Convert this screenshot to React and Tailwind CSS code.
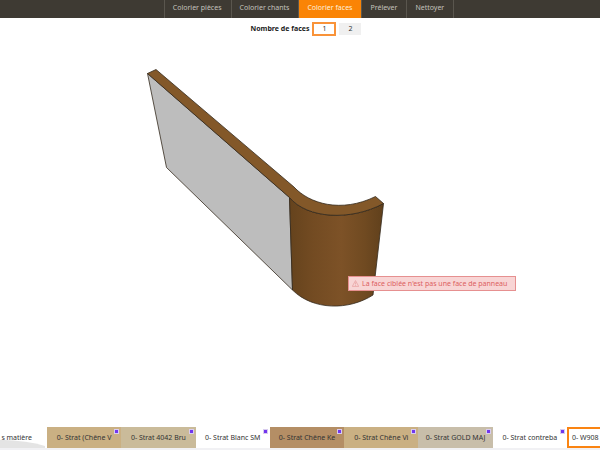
import React from 'react';

const tools = ['Colorier pièces', 'Colorier chants', 'Colorier faces', 'Prélever', 'Nettoyer'];

const materials = [
  { name: 'Strat (Chêne V', bg: 'bg-[#cab083]' },
  { name: 'Strat 4042 Bru', bg: 'bg-[#cabb9a]' },
  { name: 'Strat Blanc SM', bg: 'bg-white' },
  { name: 'Strat Chêne Ke', bg: 'bg-[#b48e65]' },
  { name: 'Strat Chêne Vi', bg: 'bg-[#cab083]' },
  { name: 'Strat GOLD MAJ', bg: 'bg-[#c8beaa]' },
  { name: 'Strat contreba', bg: 'bg-white' },
];

const ToolBar = () => (
  <nav className="flex h-[18px] shrink-0 justify-center bg-[#3e3a33] pl-[18px]">
    <div className="flex divide-x divide-[#5a564e] border-x border-[#5a564e]">
      {tools.map((tool) => (
        <button
          key={tool}
          type="button"
          className={
            tool === 'Colorier faces'
              ? 'bg-[#fa8405] pr-[9px] pb-[3px] pl-2 text-[7px] leading-3 text-[#fff0dc]'
              : 'pr-[9px] pb-[3px] pl-2 text-[7px] leading-3 text-[#c4c2bd]'
          }
        >
          {tool}
        </button>
      ))}
    </div>
  </nav>
);

const FaceCount = () => (
  <div className="flex shrink-0 items-center justify-center gap-[3px] pt-1 pl-3 text-[7px] leading-3">
    <span className="font-bold text-[#222]">Nombre de faces</span>
    <button type="button" className="h-[14px] w-6 border-2 border-[#f99339] bg-white leading-[10px]">
      1
    </button>
    <button type="button" className="h-3 w-[22px] bg-[#f0f0f0]">
      2
    </button>
  </div>
);

const Panel = () => (
  <svg viewBox="0 38 600 386" className="h-full w-full" aria-hidden="true">
    <defs>
      <linearGradient id="curve" x1="0" x2="1" y1="0" y2="0">
        <stop offset="0" stopColor="#65431d" />
        <stop offset="0.25" stopColor="#734b22" />
        <stop offset="0.55" stopColor="#7d5227" />
        <stop offset="0.8" stopColor="#704a21" />
        <stop offset="1" stopColor="#60401c" />
      </linearGradient>
    </defs>
    <g stroke="#33291d" strokeWidth="0.8" strokeLinejoin="round">
      <path d="M147.500 73L289.500 197L292.500 289.500L166.500 167Z" fill="#bdbdbd" />
      <path
        d="M289.500 197C307 218 350 221 383.500 203L373 294.500C349 310 313 310 292.500 289.500Z"
        fill="url(#curve)"
      />
      <path
        d="M147.500 73L156 69L294 186.500C309 203 341 213 375.500 196L383.500 203C350 221 307 218 289.500 197Z"
        fill="#835829"
      />
    </g>
  </svg>
);

const Warning = () => (
  <div
    role="alert"
    className="absolute top-[240px] left-[58%] flex h-[15px] items-center gap-[3px] border border-[#e69090] bg-[#f8d5d5] pr-2 pl-[3px] text-[7px] leading-3 whitespace-nowrap text-[#dc5f5f]"
  >
    <svg viewBox="0 0 12 12" className="h-[7px] w-[7px]" fill="none" stroke="#e39393" aria-hidden="true">
      <path d="M6 1L11.500 11H0.500ZM6 4V7.500M6 8.500V10" />
    </svg>
    La face ciblée n'est pas une face de panneau
  </div>
);

const Swatch = ({ name, bg }) => (
  <button type="button" className={`relative h-[21px] text-[7px] leading-3 whitespace-nowrap ${bg}`}>
    0- {name}
    <span className="absolute top-[2px] right-[2px] h-[5px] w-[5px] border border-[#d8ccef] bg-[#7136ee]" />
  </button>
);

const Palette = () => (
  <div className="flex shrink-0 overflow-hidden border-b-2 border-[#f1f1f4]">
    <button
      type="button"
      className="relative -ml-7 h-[21px] w-[75px] shrink-0 pr-[15px] text-right text-[7px] leading-3 whitespace-nowrap"
    >
      <svg viewBox="0 0 75 21" className="absolute inset-0 h-full w-full" aria-hidden="true">
        <path d="M0 21V13Q48 11 73 19V21Z" fill="#e4e4e4" />
      </svg>
      <span className="relative">s matière</span>
    </button>
    <div className="grid flex-1 grid-cols-7">
      {materials.map((material) => (
        <Swatch key={material.name} {...material} />
      ))}
    </div>
    <button
      type="button"
      className="-mr-[41px] h-[21px] w-[74px] shrink-0 border-2 border-[#fa8412] px-[3px] text-left text-[7px] leading-3 whitespace-nowrap"
    >
      0- W908
    </button>
  </div>
);

const App = () => (
  <div className="flex h-screen flex-col overflow-hidden bg-white font-['Noto_Sans',sans-serif] text-[#333]">
    <ToolBar />
    <FaceCount />
    <main className="relative min-h-0 flex-1">
      <Panel />
      <Warning />
    </main>
    <Palette />
  </div>
);

export default App;
